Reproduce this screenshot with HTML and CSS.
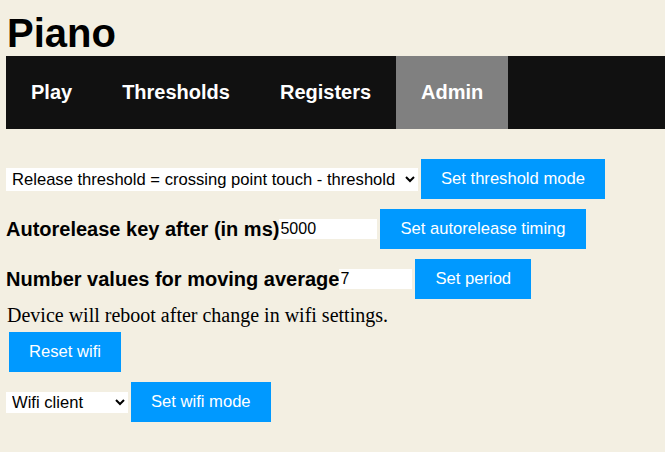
FILE: index.html
```html
<!DOCTYPE html>
<html>
<head>
<meta charset="utf-8">
<title>Piano</title>
<link rel="stylesheet" href="styles.css">
</head>
<body>
<h1 class="title">Piano</h1>
<nav class="nav">
  <a class="nav-item">Play</a>
  <a class="nav-item">Thresholds</a>
  <a class="nav-item">Registers</a>
  <a class="nav-item active">Admin</a>
</nav>
<main class="main">
  <div class="row">
    <select class="select select-threshold">
      <option>Release threshold = crossing point touch - threshold</option>
    </select>
    <button class="btn">Set threshold mode</button>
  </div>
  <div class="row">
    <label class="label">Autorelease key after (in ms)</label><input class="input input-wide" type="text" value="5000">
    <button class="btn">Set autorelease timing</button>
  </div>
  <div class="row">
    <label class="label">Number values for moving average</label><input class="input input-narrow" type="text" value="7">
    <button class="btn">Set period</button>
  </div>
  <p class="note">Device will reboot after change in wifi settings.</p>
  <div class="row row-single">
    <button class="btn">Reset wifi</button>
  </div>
  <div class="row">
    <select class="select select-wifi">
      <option>Wifi client</option>
    </select>
    <button class="btn">Set wifi mode</button>
  </div>
</main>
</body>
</html>
```

FILE: styles.css
```css
html, body {
  margin: 0;
  padding: 0;
}
body {
  background: #f3efe2;
  padding-left: 6px;
  font-family: "Liberation Sans", Arial, sans-serif;
  color: #000;
}
.title {
  font-size: 40px;
  font-weight: bold;
  line-height: 46px;
  margin: 10px 0 0 1px;
}
.nav {
  display: flex;
  background: #111111;
  height: 73px;
}
.nav-item {
  display: block;
  padding: 25px;
  font-size: 20px;
  line-height: 23px;
  font-weight: bold;
  color: #fff;
}
.nav-item.active {
  background: #808080;
}
.main {
  display: flex;
  flex-direction: column;
  align-items: flex-start;
  padding-top: 30px;
}
.row {
  display: flex;
  align-items: center;
  height: 40px;
  margin-top: 10px;
}
.row:first-child {
  margin-top: 0;
}
.row-single {
  margin-top: 5px;
  padding-left: 3px;
}
.btn {
  height: 40px;
  padding: 0 20px;
  margin-left: 3px;
  border: none;
  background: #0099ff;
  color: #fff;
  font-family: "Liberation Sans", Arial, sans-serif;
  font-size: 16.6px;
}
.row-single .btn {
  margin-left: 0;
}
.select {
  height: 23px;
  border: none;
  background: #fff;
  font-family: "Liberation Sans", Arial, sans-serif;
  font-size: 16.6px;
  color: #000;
  padding: 0 0 0 2px;
}
.select-threshold {
  width: 412px;
}
.select-wifi {
  width: 122px;
  height: 21px;
}
.label {
  font-size: 20px;
  font-weight: bold;
}
.input {
  height: 20px;
  border: none;
  background: #fff;
  font-family: "Liberation Sans", Arial, sans-serif;
  font-size: 16px;
  padding: 0 1px;
  box-sizing: border-box;
  margin: 0;
}
.input-wide {
  width: 98px;
}
.input-narrow {
  width: 73px;
}
.note {
  font-family: "Liberation Serif", "Times New Roman", serif;
  font-size: 20px;
  line-height: 23px;
  margin: 5px 0 0 1px;
}
```
